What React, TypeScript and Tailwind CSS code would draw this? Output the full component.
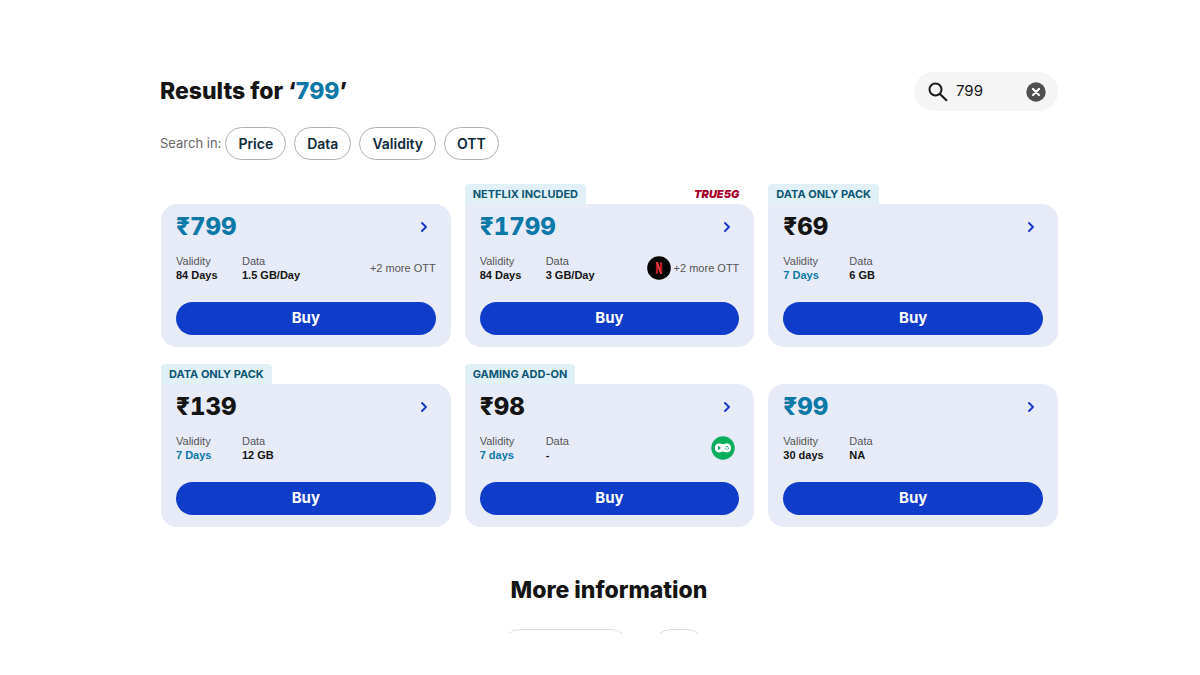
import { useState } from "react";

type Plan = {
  price: string;
  validity: string;
  data: string;
  badge?: string;
  true5g?: boolean;
  priceMatch?: boolean;
  validityMatch?: boolean;
  ott?: "more" | "netflix" | "gaming";
};

const filters = ["Price", "Data", "Validity", "OTT"];

const plans: Plan[] = [
  { price: "799", validity: "84 Days", data: "1.5 GB/Day", priceMatch: true, ott: "more" },
  {
    price: "1799",
    validity: "84 Days",
    data: "3 GB/Day",
    badge: "NETFLIX INCLUDED",
    true5g: true,
    priceMatch: true,
    ott: "netflix",
  },
  { price: "69", validity: "7 Days", data: "6 GB", badge: "DATA ONLY PACK", validityMatch: true },
  { price: "139", validity: "7 Days", data: "12 GB", badge: "DATA ONLY PACK", validityMatch: true },
  {
    price: "98",
    validity: "7 days",
    data: "-",
    badge: "GAMING ADD-ON",
    validityMatch: true,
    ott: "gaming",
  },
  { price: "99", validity: "30 days", data: "NA", priceMatch: true },
];

function SearchIcon() {
  return (
    <svg viewBox="0 0 20 20" className="h-5 w-5 shrink-0" fill="none" stroke="#1c1c1c" aria-hidden="true">
      <circle cx="7.5" cy="7.5" r="6" strokeWidth="2" />
      <path d="M12 12l6.4 6.2" strokeWidth="2.2" strokeLinecap="round" />
    </svg>
  );
}

function ClearIcon() {
  return (
    <svg viewBox="0 0 20 20" className="h-5 w-5" aria-hidden="true">
      <circle cx="10" cy="10" r="9.7" fill="#505050" />
      <path d="M7 7l6 6M13 7l-6 6" stroke="#fff" strokeWidth="2.2" strokeLinecap="round" />
    </svg>
  );
}

function ChevronIcon() {
  return (
    <svg viewBox="0 0 8 12" className="h-3 w-2" fill="none" aria-hidden="true">
      <path
        d="M2 2l4 4-4 4"
        stroke="#1c3cc4"
        strokeWidth="2"
        strokeLinecap="round"
        strokeLinejoin="round"
      />
    </svg>
  );
}

function NetflixIcon() {
  return (
    <svg viewBox="0 0 24 24" className="h-6 w-6" role="img" aria-label="Netflix">
      <circle cx="12" cy="12" r="11.8" fill="#050505" />
      <path d="M8.9 6.3h2.2v11.5l-2.2.3zM13 6.3h2.2v11.8l-2.2-.3z" fill="#b81d24" />
      <path d="M8.9 6.3h2.2l4.1 11.8-2.2-.3z" fill="#e8373b" />
    </svg>
  );
}

function GamingIcon() {
  return (
    <svg viewBox="0 0 24 24" className="h-6 w-6" role="img" aria-label="Gaming">
      <circle cx="12" cy="12" r="11.7" fill="#09ad5c" />
      <path
        d="M8 7.600c1.500 0 2.500.6 4 .6s2.500-.6 4-.6c2.500 0 4.200 1.900 4.200 4.400s-1.700 4.400-4.200 4.400c-1.700 0-2.600-.9-4-.9s-2.300.9-4 .9c-2.500 0-4.200-1.900-4.200-4.400S5.500 7.600 8 7.600z"
        fill="#fff"
      />
      <path d="M7 9.800l3 2.200-3 2.200z" fill="#09ad5c" />
      <path d="M15.900 10l2 2-2 2-2-2z" fill="none" stroke="#09ad5c" strokeWidth="1" strokeDasharray="1.600 .8" />
    </svg>
  );
}

function PlanCard({ plan }: { plan: Plan }) {
  return (
    <article>
      <div className="flex h-5 items-center justify-between pr-[15px]">
        {plan.badge && (
          <span className="h-5 rounded-t bg-[#e1f0f7] px-2 text-[11px] leading-5 font-bold text-[#0d5675]">
            {plan.badge}
          </span>
        )}
        {plan.true5g && (
          <span className="text-[11px] font-black text-[#a8002c] italic">TRUE5G</span>
        )}
      </div>
      <div
        className={`bg-[#e7ebf8] px-[15px] pt-2 pb-3 ${
          plan.badge ? "rounded-2xl rounded-tl-none" : "rounded-2xl"
        }`}
      >
        <div className="flex h-[30px] items-center justify-between pr-2">
          <h2
            className={`text-2xl font-extrabold tabular-nums ${
              plan.priceMatch ? "text-[#0b78a8]" : "text-[#141414]"
            }`}
          >
            ₹{plan.price}
          </h2>
          <button type="button" aria-label={`Details ₹${plan.price}`}>
            <ChevronIcon />
          </button>
        </div>
        <div className="mt-3 flex h-7 items-center justify-between font-['Liberation_Sans',Arial,sans-serif] text-[11px]">
          <dl className="flex leading-[14px]">
            <div className="w-[66px]">
              <dt className="text-[#555]">Validity</dt>
              <dd className={`font-bold ${plan.validityMatch ? "text-[#0b78a8]" : "text-[#141414]"}`}>
                {plan.validity}
              </dd>
            </div>
            <div>
              <dt className="text-[#555]">Data</dt>
              <dd className="font-bold text-[#141414]">{plan.data}</dd>
            </div>
          </dl>
          {plan.ott === "gaming" && (
            <div className="pr-1">
              <GamingIcon />
            </div>
          )}
          {(plan.ott === "more" || plan.ott === "netflix") && (
            <div className="flex items-center gap-[3px] text-[#555]">
              {plan.ott === "netflix" && <NetflixIcon />}
              +2 more OTT
            </div>
          )}
        </div>
        <button
          type="button"
          className="mt-5 h-[33px] w-full rounded-full bg-[#0f3cc9] text-[15px] font-bold text-white"
        >
          Buy
        </button>
      </div>
    </article>
  );
}

export default function App() {
  const [query, setQuery] = useState("799");

  return (
    <main className="bg-white px-[142px] pt-[72px] font-['Inter','Liberation_Sans',sans-serif]">
      <div className="pl-[18px]">
        <header className="flex h-[39px] items-center justify-between">
          <h1 className="text-[23px] font-extrabold text-[#141414]">
            Results for ‘<span className="text-[#0b78a8]">799</span>’
          </h1>
          <div className="flex h-[39px] w-36 items-center rounded-full bg-[#f5f5f5] pr-3 pl-3.5">
            <SearchIcon />
            <input
              type="text"
              value={query}
              onChange={(e) => setQuery(e.target.value)}
              aria-label="Search plans"
              className="ml-2 w-full min-w-0 text-[15px] text-[#141414] outline-none"
            />
            <button type="button" aria-label="Clear search" onClick={() => setQuery("")}>
              <ClearIcon />
            </button>
          </div>
        </header>

        <div className="mt-4 flex items-center gap-2">
          <span className="-mr-1 text-[13px] text-[#666]">Search in:</span>
          {filters.map((f) => (
            <button
              key={f}
              type="button"
              className="h-[33px] rounded-full border border-[#b0b0b0] px-3 text-sm font-semibold text-[#0c2a3a]"
            >
              {f}
            </button>
          ))}
        </div>
      </div>

      <section className="mt-6 grid grid-cols-3 gap-x-3.5 gap-y-[17px] pl-[19px]">
        {plans.map((plan) => (
          <PlanCard key={plan.price} plan={plan} />
        ))}
      </section>

      <section className="mt-12 pl-[18px]">
        <h2 className="text-center text-[23px] leading-[30px] font-extrabold text-[#141414]">
          More information
        </h2>
        {/* only the top edge of the tabs shows above the fold */}
        <div className="mt-6 flex h-[5px] justify-center gap-[26px] overflow-hidden pr-3">
          <div className="h-[33px] w-[125px] shrink-0 rounded-full border border-[#dcdcdc]" />
          <div className="h-[33px] w-[50px] shrink-0 rounded-full border border-[#dcdcdc]" />
        </div>
      </section>
    </main>
  );
}
